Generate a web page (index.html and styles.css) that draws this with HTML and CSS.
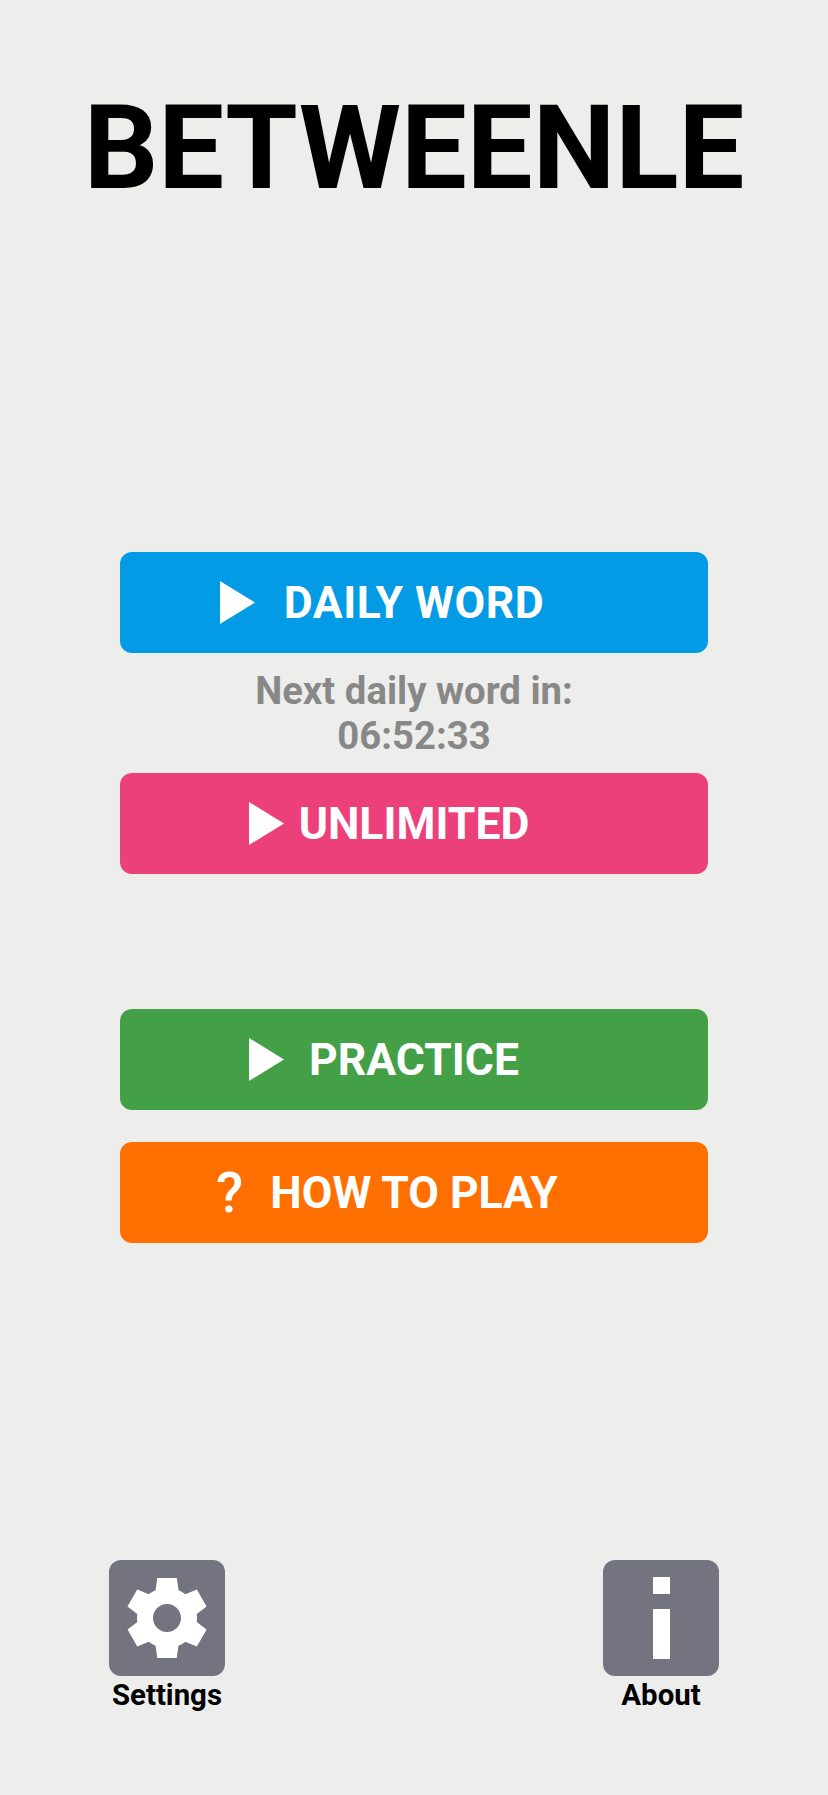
FILE: index.html
```html
<!DOCTYPE html>
<html lang="en">
<head>
    <meta charset="UTF-8">
    <meta name="viewport" content="width=device-width, initial-scale=1.0">
    <title>Betweenle</title>
    <link rel="stylesheet" href="styles.css">
</head>
<body>
    <h1 class="title">BETWEENLE</h1>

    <div class="menu">
        <button class="menu-btn btn-daily">
            <svg class="play-icon" viewBox="0 0 35 43"><polygon points="0,0 35,21.5 0,43"/></svg>
            <span class="btn-label">DAILY WORD</span>
        </button>
        <div class="countdown">Next daily word in:<br>06:52:33</div>
        <button class="menu-btn btn-unlimited">
            <svg class="play-icon" viewBox="0 0 35 43"><polygon points="0,0 35,21.5 0,43"/></svg>
            <span class="btn-label">UNLIMITED</span>
        </button>
        <button class="menu-btn btn-practice">
            <svg class="play-icon" viewBox="0 0 35 43"><polygon points="0,0 35,21.5 0,43"/></svg>
            <span class="btn-label">PRACTICE</span>
        </button>
        <button class="menu-btn btn-howto">
            <span class="help-icon">?</span>
            <span class="btn-label">HOW TO PLAY</span>
        </button>
    </div>

    <div class="footer">
        <div class="tile">
            <div class="tile-icon">
                <svg width="96" height="96" viewBox="0 0 24 24"><path d="M19.44 12.99l-.01.02c.04-.33.08-.67.08-1.01 0-.34-.03-.66-.07-.99l.01.02 2.44-1.92-2.43-4.22-2.87 1.16.01.01c-.52-.4-1.09-.74-1.71-1h.01L14.44 2H9.57l-.44 3.07h.01c-.62.26-1.19.6-1.71 1l.01-.01-2.88-1.17-2.44 4.22 2.44 1.92.01-.02c-.04.33-.07.65-.07.99 0 .34.03.68.08 1.01l-.01-.02-2.1 1.65-.33.26 2.43 4.2 2.88-1.15-.02-.04c.53.41 1.1.75 1.73 1.01h-.03L9.58 22h4.85s.03-.18.06-.42l.38-2.65h-.01c.62-.26 1.2-.6 1.73-1.01l-.02.04 2.88 1.15 2.43-4.2s-.14-.12-.33-.26l-2.11-1.66zM12 15.5c-1.93 0-3.5-1.57-3.5-3.5s1.57-3.5 3.5-3.5 3.5 1.57 3.5 3.5-1.57 3.5-3.5 3.5z"/></svg>
            </div>
            <span class="tile-label">Settings</span>
        </div>
        <div class="tile">
            <div class="tile-icon">
                <svg width="96" height="96" viewBox="0 0 96 96"><rect x="40" y="7" width="17" height="17"/><rect x="40" y="39" width="17" height="50"/></svg>
            </div>
            <span class="tile-label">About</span>
        </div>
    </div>
</body>
</html>
```

FILE: styles.css
```css
body {
    display: flex;
    flex-direction: column;
    height: 1795px;
    margin: 0;
    background-color: #ededeb;
    font-family: Roboto, Arial, sans-serif;
    overflow: hidden;
}

.title {
    margin: 0;
    padding-top: 79px;
    height: 552px;
    box-sizing: border-box;
    font-size: 117px;
    line-height: 138px;
    font-weight: 700;
    text-align: center;
    color: #000;
}

.menu {
    display: flex;
    flex-direction: column;
    width: 588px;
    margin: 0 auto;
}

.menu-btn {
    display: grid;
    grid-template-columns: 1fr auto 1fr;
    align-items: center;
    height: 101px;
    padding: 0;
    border: none;
    border-radius: 12px;
    color: #fff;
    font-family: inherit;
    font-size: 44.5px;
    font-weight: 700;
    cursor: pointer;
}

.btn-label {
    grid-column: 2;
}

.play-icon {
    grid-column: 1;
    justify-self: end;
    width: 35px;
    height: 43px;
    fill: #fff;
}

.help-icon {
    grid-column: 1;
    justify-self: end;
    margin-right: 27px;
    font-size: 56px;
    font-weight: 500;
    line-height: 1;
}

.btn-daily {
    background-color: #039be5;
    letter-spacing: 0.5px;
}

.btn-daily .play-icon {
    margin-right: 29px;
}

.btn-unlimited {
    background-color: #ec407a;
}

.btn-unlimited .play-icon {
    margin-right: 15px;
}

.btn-practice {
    margin-top: 135px;
    background-color: #43a047;
}

.btn-practice .play-icon {
    margin-right: 25px;
}

.btn-howto {
    margin-top: 32px;
    background-color: #ff6f00;
}

.countdown {
    padding: 15px 0;
    font-size: 38.3px;
    line-height: 45px;
    font-weight: 700;
    text-align: center;
    color: #888888;
}

.footer {
    display: flex;
    justify-content: space-between;
    margin-top: auto;
    padding: 0 109px 81px 109px;
}

.tile {
    display: flex;
    flex-direction: column;
    align-items: center;
    width: 116px;
}

.tile-icon {
    display: flex;
    justify-content: center;
    align-items: center;
    width: 116px;
    height: 116px;
    border-radius: 12px;
    background-color: #737480;
    fill: #fff;
}

.tile-label {
    font-size: 29.4px;
    line-height: 38px;
    font-weight: 700;
    color: #000;
}
```
